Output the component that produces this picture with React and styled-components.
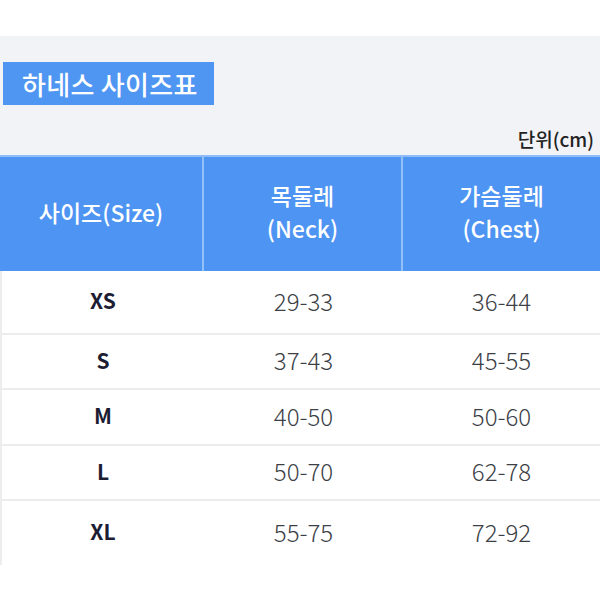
import styled, { createGlobalStyle } from "styled-components";

const GlobalStyle = createGlobalStyle`
  body {
    margin: 0;
    background: #ffffff;
    font-family: "Noto Sans CJK KR", "Noto Sans", sans-serif;
  }
`;

const rows = [
  { size: "XS", neck: "29-33", chest: "36-44", h: 64 },
  { size: "S", neck: "37-43", chest: "45-55", h: 55 },
  { size: "M", neck: "40-50", chest: "50-60", h: 56 },
  { size: "L", neck: "50-70", chest: "62-78", h: 55 },
  { size: "XL", neck: "55-75", chest: "72-92", h: 64 },
];

export default function App() {
  return (
    <>
      <GlobalStyle />
      <Page>
        <TopBand>
          <TitleBox>하네스 사이즈표</TitleBox>
          <Unit>단위(cm)</Unit>
        </TopBand>
        <Table>
          <HeadCell>사이즈(Size)</HeadCell>
          <HeadCell>
            목둘레
            <br />
            (Neck)
          </HeadCell>
          <HeadCell $last>
            가슴둘레
            <br />
            (Chest)
          </HeadCell>
          {rows.map((r, i) => (
            <Row key={r.size} $h={r.h} $last={i === rows.length - 1}>
              <SizeCell>{r.size}</SizeCell>
              <ValueCell>{r.neck}</ValueCell>
              <ValueCell>{r.chest}</ValueCell>
            </Row>
          ))}
        </Table>
      </Page>
    </>
  );
}

const Page = styled.div`
  width: 600px;
  height: 600px;
  padding-top: 36px;
  box-sizing: border-box;
`;

const TopBand = styled.div`
  background: #f2f3f7;
  height: 119px;
  box-sizing: border-box;
  padding: 26px 6px 0 3px;
  display: flex;
  flex-direction: column;
`;

const TitleBox = styled.div`
  width: 211px;
  height: 43px;
  background: #4f95f2;
  color: #ffffff;
  font-size: 26px;
  font-weight: 500;
  display: flex;
  align-items: center;
  padding-left: 19px;
  box-sizing: border-box;
  letter-spacing: 0.3px;
`;

const Unit = styled.div`
  margin-top: 20px;
  align-self: flex-end;
  font-size: 19px;
  font-weight: 500;
  color: #222;
`;

const Table = styled.div`
  display: grid;
  grid-template-columns: 204px 199px 197px;
  border-top: 2px solid #8fbdf7;
`;

const HeadCell = styled.div`
  height: 114px;
  background: #4d94f3;
  color: #ffffff;
  font-size: 23px;
  line-height: 33px;
  font-weight: 500;
  display: flex;
  align-items: center;
  justify-content: center;
  text-align: center;
  padding-bottom: 4px;
  border-right: ${(p) => (p.$last ? "none" : "2px solid #93c0f7")};
  box-sizing: border-box;
`;

const Row = styled.div`
  display: contents;
  & > div {
    height: ${(p) => p.$h}px;
    border-bottom: ${(p) => (p.$last ? "none" : "2px solid #ececee")};
    padding-bottom: 4px;
  }
  & > div:first-child {
    border-left: 2px solid #ededed;
  }
`;

const Cell = styled.div`
  display: flex;
  align-items: center;
  justify-content: center;
  box-sizing: border-box;
  background: #ffffff;
`;

const SizeCell = styled(Cell)`
  font-size: 21px;
  font-weight: 700;
  color: #1c1d33;
`;

const ValueCell = styled(Cell)`
  font-size: 24px;
  font-weight: 300;
  color: #3d3f47;
`;
